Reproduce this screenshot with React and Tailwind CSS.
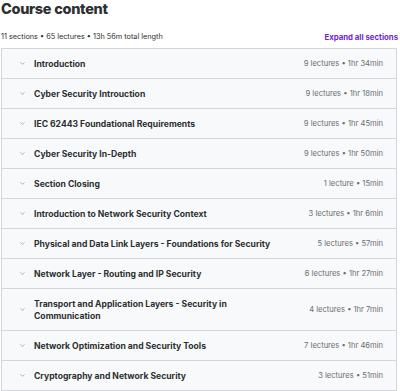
import { ChevronDown } from 'lucide-react';

const sections = [
    { title: 'Introduction', meta: '9 lectures • 1hr 34min' },
    { title: 'Cyber Security Introuction', meta: '9 lectures • 1hr 18min' },
    { title: 'IEC 62443 Foundational Requirements', meta: '9 lectures • 1hr 45min' },
    { title: 'Cyber Security In-Depth', meta: '9 lectures • 1hr 50min' },
    { title: 'Section Closing', meta: '1 lecture • 15min' },
    { title: 'Introduction to Network Security Context', meta: '3 lectures • 1hr 6min' },
    { title: 'Physical and Data Link Layers - Foundations for Security', meta: '5 lectures • 57min' },
    { title: 'Network Layer - Routing and IP Security', meta: '6 lectures • 1hr 27min' },
    { title: 'Transport and Application Layers - Security in Communication', meta: '4 lectures • 1hr 7min' },
    { title: 'Network Optimization and Security Tools', meta: '7 lectures • 1hr 46min' },
    { title: 'Cryptography and Network Security', meta: '3 lectures • 51min' }
];

/**
 * Udemy-style curriculum list
 */
export default function App() {
    return (
        <div className="w-[400px] h-[391px] bg-white overflow-hidden text-[#2d2f31] font-['Inter',sans-serif]">
            <h2 className="text-[14.5px] font-extrabold leading-[18px] tracking-[-0.3px] pl-[1px]">
                Course content
            </h2>

            {/* Summary line */}
            <div className="h-[30px] flex items-end justify-between pb-[6px] pl-[1px] pr-[2px]">
                <span className="text-[7.3px] leading-[10px] text-[#2d2f31]">
                    11 sections • 65 lectures • 13h 56m total length
                </span>
                <button className="text-[7.8px] leading-[10px] font-bold text-[#6d28d2]">
                    Expand all sections
                </button>
            </div>

            {/* Sections */}
            <div className="ml-[1px] w-[396px] border border-[#d1d7dc]">
                {sections.map((s, i) => (
                    <div
                        key={i}
                        className="flex items-center bg-[#f7f9fa] border-b border-[#d1d7dc] last:border-b-0 pl-[17px] pr-[13px] py-[8.5px]"
                    >
                        <ChevronDown className="w-[7px] h-[7px] text-[#6a6f73] shrink-0" strokeWidth={1.75} />
                        <div className="flex-1 ml-[8px] mr-[36px] text-[8.6px] leading-[12px] font-bold">
                            {s.title}
                        </div>
                        <div className="shrink-0 text-[7.6px] leading-[12px] text-[#6a6f73]">
                            {s.meta}
                        </div>
                    </div>
                ))}
            </div>
        </div>
    );
}
